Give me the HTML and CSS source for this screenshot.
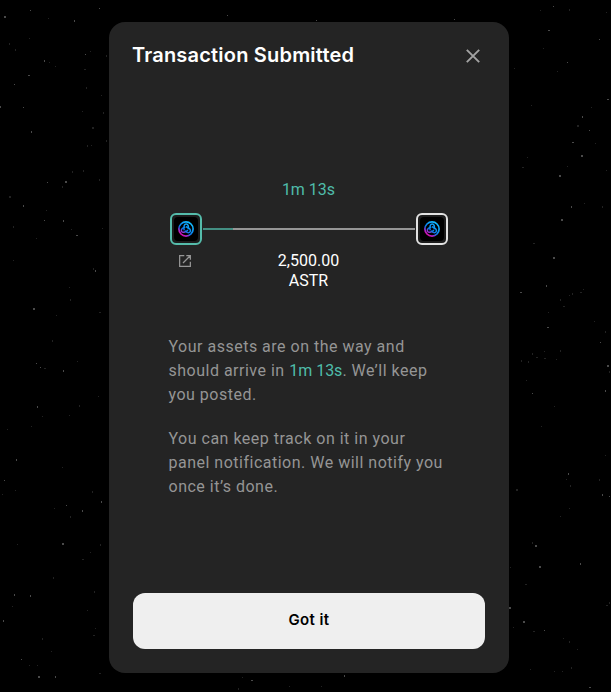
FILE: index.html
```html
<!DOCTYPE html>
<html lang="en">
<head>
<meta charset="utf-8">
<title>Transaction Submitted</title>
<link rel="stylesheet" href="styles.css">
</head>
<body>
<svg class="stars" viewBox="0 0 611 692" aria-hidden="true">
  <path class="bright" d="M4 16h2v2h-2zM99 8h1v1h-1zM30 10h1v1h-1zM74 20h1v2h-1zM44 60h1v2h-1zM28 75h2v1h-2zM14 84h1v1h-1zM0 106h1v2h-1zM23 107h1v1h-1zM31 131h1v2h-1zM85 54h1v1h-1zM65 181h2v2h-2zM47 182h1v1h-1zM23 205h1v2h-1zM44 220h1v1h-1zM63 220h1v2h-1zM76 235h2v1h-2zM95 270h1v2h-1zM33 308h2v2h-2zM63 370h1v2h-1zM36 363h1v1h-1zM40 367h1v1h-1zM37 406h1v2h-1zM16 459h1v2h-1zM4 480h1v1h-1zM82 510h1v2h-1zM101 501h1v2h-1zM66 505h1v1h-1zM62 543h2v2h-2zM14 594h1v2h-1zM30 595h1v2h-1zM3 620h1v2h-1zM21 659h1v1h-1zM55 676h1v2h-1zM38 676h2v2h-2zM553 6h1v1h-1zM548 30h2v1h-2zM599 39h1v1h-1zM567 62h1v1h-1zM607 99h2v1h-2zM582 116h1v2h-1zM589 130h1v1h-1zM572 142h2v1h-2zM581 155h2v2h-2zM559 175h2v2h-2zM571 206h1v2h-1zM561 219h2v2h-2zM553 257h2v2h-2zM546 285h1v2h-1zM520 292h2v1h-2zM547 327h2v1h-2zM600 342h1v1h-1zM607 365h2v2h-2zM605 390h1v2h-1zM532 393h1v1h-1zM568 473h1v2h-1zM602 494h1v2h-1zM609 496h1v1h-1zM535 545h2v2h-2zM539 566h2v2h-2zM580 563h1v2h-1zM509 607h2v2h-2zM523 621h2v2h-2zM589 687h2v1h-2zM544 630h1v1h-1zM251 680h2v1h-2zM344 675h1v2h-1zM316 20h1v1h-1zM227 15h1v1h-1zM454 19h1v1h-1z"/>
  <path class="mid" d="M48 18h1v1h-1zM29 38h1v1h-1zM9 43h1v2h-1zM15 49h1v2h-1zM49 62h1v1h-1zM55 66h1v1h-1zM106 55h1v2h-1zM90 51h1v1h-1zM84 69h2v1h-2zM86 87h1v2h-1zM101 95h1v1h-1zM82 111h1v1h-1zM103 112h1v2h-1zM92 127h2v2h-2zM106 140h1v2h-1zM87 145h1v2h-1zM91 145h1v1h-1zM72 171h1v2h-1zM83 170h1v2h-1zM62 186h1v2h-1zM99 179h1v2h-1zM9 196h2v2h-2zM46 210h1v1h-1zM13 226h1v2h-1zM71 229h1v1h-1zM102 228h1v1h-1zM36 238h1v1h-1zM13 260h1v1h-1zM93 268h1v2h-1zM69 287h1v1h-1zM70 299h1v2h-1zM99 312h2v1h-2zM56 315h1v1h-1zM52 340h1v2h-1zM77 361h1v1h-1zM44 368h2v1h-2zM79 405h1v2h-1zM98 396h1v1h-1zM69 415h1v1h-1zM42 416h1v1h-1zM31 426h1v1h-1zM7 429h1v1h-1zM62 467h1v1h-1zM92 491h1v2h-1zM2 494h1v1h-1zM15 490h1v1h-1zM70 516h1v2h-1zM54 508h1v1h-1zM17 544h1v1h-1zM100 544h1v2h-1zM82 559h2v1h-2zM90 552h1v1h-1zM53 577h1v2h-1zM94 591h1v2h-1zM12 606h1v1h-1zM87 610h1v1h-1zM95 628h1v1h-1zM93 635h2v1h-2zM42 638h1v2h-1zM51 651h1v1h-1zM29 665h1v1h-1zM37 665h1v1h-1zM99 673h2v1h-2zM569 9h1v2h-1zM606 12h1v1h-1zM540 10h1v1h-1zM514 68h1v1h-1zM543 48h1v1h-1zM557 71h1v1h-1zM531 105h1v1h-1zM591 107h1v1h-1zM577 125h2v2h-2zM595 143h1v1h-1zM567 166h1v1h-1zM522 167h2v1h-2zM606 170h1v1h-1zM527 157h1v1h-1zM602 206h1v2h-1zM584 203h1v1h-1zM533 243h2v1h-2zM583 289h1v1h-1zM580 292h2v1h-2zM572 293h1v2h-1zM569 295h1v1h-1zM560 299h1v2h-1zM563 306h2v1h-2zM548 312h1v1h-1zM594 321h1v1h-1zM605 331h1v2h-1zM544 351h1v1h-1zM560 350h1v2h-1zM544 358h2v1h-2zM536 357h2v1h-2zM532 353h1v2h-1zM521 360h1v2h-1zM528 361h1v2h-1zM556 359h1v1h-1zM609 371h1v2h-1zM526 380h1v1h-1zM554 406h1v1h-1zM541 426h1v1h-1zM605 455h1v1h-1zM566 479h1v1h-1zM599 479h1v2h-1zM570 485h1v2h-1zM516 489h2v2h-2zM560 516h1v1h-1zM569 508h1v1h-1zM532 542h1v2h-1zM510 567h1v1h-1zM525 584h2v1h-2zM606 605h2v1h-2zM609 602h1v2h-1zM533 631h2v1h-2zM513 627h1v1h-1zM563 638h1v1h-1zM569 641h1v2h-1zM577 649h1v1h-1zM571 667h1v2h-1zM562 671h1v1h-1zM530 669h1v1h-1zM554 671h1v1h-1zM238 688h1v2h-1zM289 686h1v1h-1zM321 686h1v1h-1zM242 677h1v1h-1z"/>
</svg>
<main class="modal">
  <header class="modal-header">
    <h1 class="title">Transaction Submitted</h1>
    <button class="close" aria-label="Close">
      <svg width="14" height="14" viewBox="0 0 14 14"><path d="M.8.8l12.4 12.4M13.2.8L.8 13.2" stroke="#a3a3a3" stroke-width="1.9"/></svg>
    </button>
  </header>
  <svg class="defs" width="0" height="0" aria-hidden="true">
    <defs>
      <linearGradient id="astar" gradientUnits="userSpaceOnUse" x1="2" y1="14" x2="11" y2="2">
        <stop offset="0" stop-color="#f000a5"/>
        <stop offset=".25" stop-color="#9a2fd0"/>
        <stop offset=".45" stop-color="#0878ea"/>
        <stop offset="1" stop-color="#12b8ff"/>
      </linearGradient>
      <symbol id="token" viewBox="0 0 16 16">
        <g fill="none" stroke="url(#astar)">
          <circle cx="8" cy="8" r="7.100" stroke-width="1.700"/>
          <path stroke-width="1.500" d="M6.200 9.200C5.300 5.500 6.300 3 8.200 3s3 2.800 1.700 5.200M7.860 5.840c3.650 1.070 5.320 3.200 4.370 4.840s-3.920 1.200-5.360-1.140M9.940 8.960c-2.750 2.640-5.430 3.020-6.380 1.380s.92-4 3.660-4.060"/>
        </g>
      </symbol>
    </defs>
  </svg>
  <section class="transfer">
    <div class="eta">1m 13s</div>
    <div class="route">
      <div class="chain source"><div class="tile"><svg width="16" height="16"><use href="#token"/></svg></div></div>
      <div class="track"><div class="progress"></div></div>
      <div class="chain"><div class="tile"><svg width="16" height="16"><use href="#token"/></svg></div></div>
    </div>
    <div class="details">
      <svg class="external" width="12" height="12" viewBox="0 0 12 12" fill="none" stroke="#969696" stroke-width="1.25"><path d="M5.300.65H.65v10.700h10.700V6.700M7.300.65h4.050V4.700M11.200.8L4 8"/></svg>
      <div class="amount">2,500.00<br>ASTR</div>
      <span></span>
    </div>
  </section>
  <section class="message">
    <p>Your assets are on the way and should arrive in <span class="time">1m 13s</span>. We’ll keep you posted.</p>
    <p>You can keep track on it in your panel notification. We will notify you once it’s done.</p>
  </section>
  <button class="confirm">Got it</button>
</main>
</body>
</html>
```
FILE: styles.css
```css
* { box-sizing: border-box; }
body {
  margin: 0;
  height: 692px;
  padding: 22px 0 0 109px;
  overflow: hidden;
  background: #000;
  font-family: Roboto, sans-serif;
  font-size: 16px;
}
.stars { position: absolute; inset: 0; width: 611px; height: 692px; }
.bright { fill: #4a4a4a; }
.mid { fill: #222; }
.modal {
  position: relative;
  display: flex;
  flex-direction: column;
  width: 400px;
  height: 651px;
  padding: 20px 24px 24px;
  border-radius: 16px;
  background: #242424;
}
.modal-header { display: flex; align-items: center; justify-content: space-between; height: 28px; }
.title { margin: -2px 0 0 -1px; color: #fff; font: 600 20px/28px Inter, sans-serif; letter-spacing: .2px; white-space: nowrap; }
.close { display: flex; padding: 0; margin-right: 5px; border: 0; background: none; }
.defs { display: block; height: 0; flex: none; }
.transfer { width: 278px; margin: 110px 0 0 37px; }
.eta { margin-right: 1px; color: #4fbcaa; line-height: 20px; text-align: center; }
.route { display: flex; align-items: center; justify-content: space-between; margin-top: 13px; }
.chain { display: flex; width: 32px; height: 32px; padding: 2px; border: 2px solid #e2e2e2; border-radius: 6px; background: #1c1c1c; }
.source { border-color: #55bcab; }
.tile { display: grid; place-items: center; width: 24px; height: 24px; border-radius: 4px; background: #000; }
.track { width: 212px; height: 2px; margin-bottom: 1px; background: #969696; }
.progress { width: 30px; height: 2px; background: #438f83; }
.details { display: grid; grid-template-columns: 32px 1fr 32px; margin-top: 6px; }
.external { margin: 4px 0 0 9px; }
.amount { margin-right: 1px; color: #fff; line-height: 20px; text-align: center; }
.message { width: 280px; margin: 44px 0 0 35.5px; color: #959595; line-height: 24px; letter-spacing: .5px; }
.message p { margin: 0 0 20px; }
.time { color: #4fbcaa; letter-spacing: 0; }
.confirm {
  height: 56px;
  margin-top: auto;
  padding: 0 0 3px;
  border: 0;
  border-radius: 12px;
  background: #efefef;
  color: #000;
  font: 600 15px Inter, sans-serif;
  letter-spacing: .4px;
}
```
